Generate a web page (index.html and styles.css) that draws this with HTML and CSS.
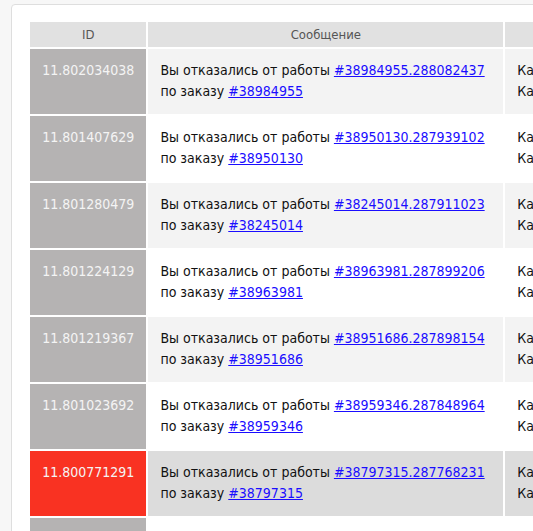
FILE: index.html
```html
<!DOCTYPE html>
<html lang="ru">
<head>
<meta charset="utf-8">
<link rel="stylesheet" href="styles.css">
</head>
<body>
<div class="panel">
  <table class="log">
    <thead>
      <tr><th class="c-id">ID</th><th class="c-msg">Сообщение</th><th class="c-extra"></th></tr>
    </thead>
    <tbody>
      <tr class="odd"><td class="c-id">11.802034038</td><td class="c-msg">Вы отказались от работы <a href="#">#38984955.288082437</a><br>по заказу <a href="#">#38984955</a></td><td class="c-extra">Кабинет<br>Каталог</td></tr>
      <tr class="even"><td class="c-id">11.801407629</td><td class="c-msg">Вы отказались от работы <a href="#">#38950130.287939102</a><br>по заказу <a href="#">#38950130</a></td><td class="c-extra">Кабинет<br>Каталог</td></tr>
      <tr class="odd"><td class="c-id">11.801280479</td><td class="c-msg">Вы отказались от работы <a href="#">#38245014.287911023</a><br>по заказу <a href="#">#38245014</a></td><td class="c-extra">Кабинет<br>Каталог</td></tr>
      <tr class="even"><td class="c-id">11.801224129</td><td class="c-msg">Вы отказались от работы <a href="#">#38963981.287899206</a><br>по заказу <a href="#">#38963981</a></td><td class="c-extra">Кабинет<br>Каталог</td></tr>
      <tr class="odd"><td class="c-id">11.801219367</td><td class="c-msg">Вы отказались от работы <a href="#">#38951686.287898154</a><br>по заказу <a href="#">#38951686</a></td><td class="c-extra">Кабинет<br>Каталог</td></tr>
      <tr class="even"><td class="c-id">11.801023692</td><td class="c-msg">Вы отказались от работы <a href="#">#38959346.287848964</a><br>по заказу <a href="#">#38959346</a></td><td class="c-extra">Кабинет<br>Каталог</td></tr>
      <tr class="active"><td class="c-id">11.800771291</td><td class="c-msg">Вы отказались от работы <a href="#">#38797315.287768231</a><br>по заказу <a href="#">#38797315</a></td><td class="c-extra">Кабинет<br>Каталог</td></tr>
      <tr class="even"><td class="c-id">11.800713012</td><td class="c-msg">Вы отказались от работы <a href="#">#38790011.287750102</a><br>по заказу <a href="#">#38790011</a></td><td class="c-extra">Кабинет<br>Каталог</td></tr>
    </tbody>
  </table>
</div>
</body>
</html>
```
FILE: styles.css
```css
html, body {
  margin: 0;
  padding: 0;
  overflow: hidden;
  background: #f7f7f7;
  height: 100%;
}
body {
  padding: 4px 0 0 11px;
  font-family: "DejaVu Sans Condensed", "DejaVu Sans", sans-serif;
}
.panel {
  width: 700px;
  background: #fff;
  border: 1px solid #dedede;
  border-radius: 4px;
  padding: 15px 0 0 16px;
  min-height: 600px;
}
.log {
  border-collapse: separate;
  border-spacing: 2px;
  table-layout: fixed;
}
.log th {
  background: #e1e1e1;
  color: #555;
  font-weight: normal;
  font-size: 13px;
  height: 25px;
  padding: 0;
  text-align: center;
}
.c-id { width: 117px; }
.c-msg { width: 331px; }
.c-extra { width: 200px; }
.log td {
  font-size: 14px;
  line-height: 21px;
  padding: 11px 12px 12px;
  vertical-align: top;
  color: #111;
  height: 42px;
  white-space: nowrap;
}
.log td.c-id {
  background: #b5b3b3;
  color: #f4f4f4;
  text-align: center;
  padding: 11px 0 0;
  height: 54px;
}
.log tr.odd td.c-msg, .log tr.odd td.c-extra { background: #f3f3f3; }
.log tr.even td.c-msg, .log tr.even td.c-extra { background: #fff; }
.log tr.active td.c-msg, .log tr.active td.c-extra { background: #dcdcdc; }
.log tr.active td.c-id { background: #f93222; }
.log a { color: #1a0dff; }
```
